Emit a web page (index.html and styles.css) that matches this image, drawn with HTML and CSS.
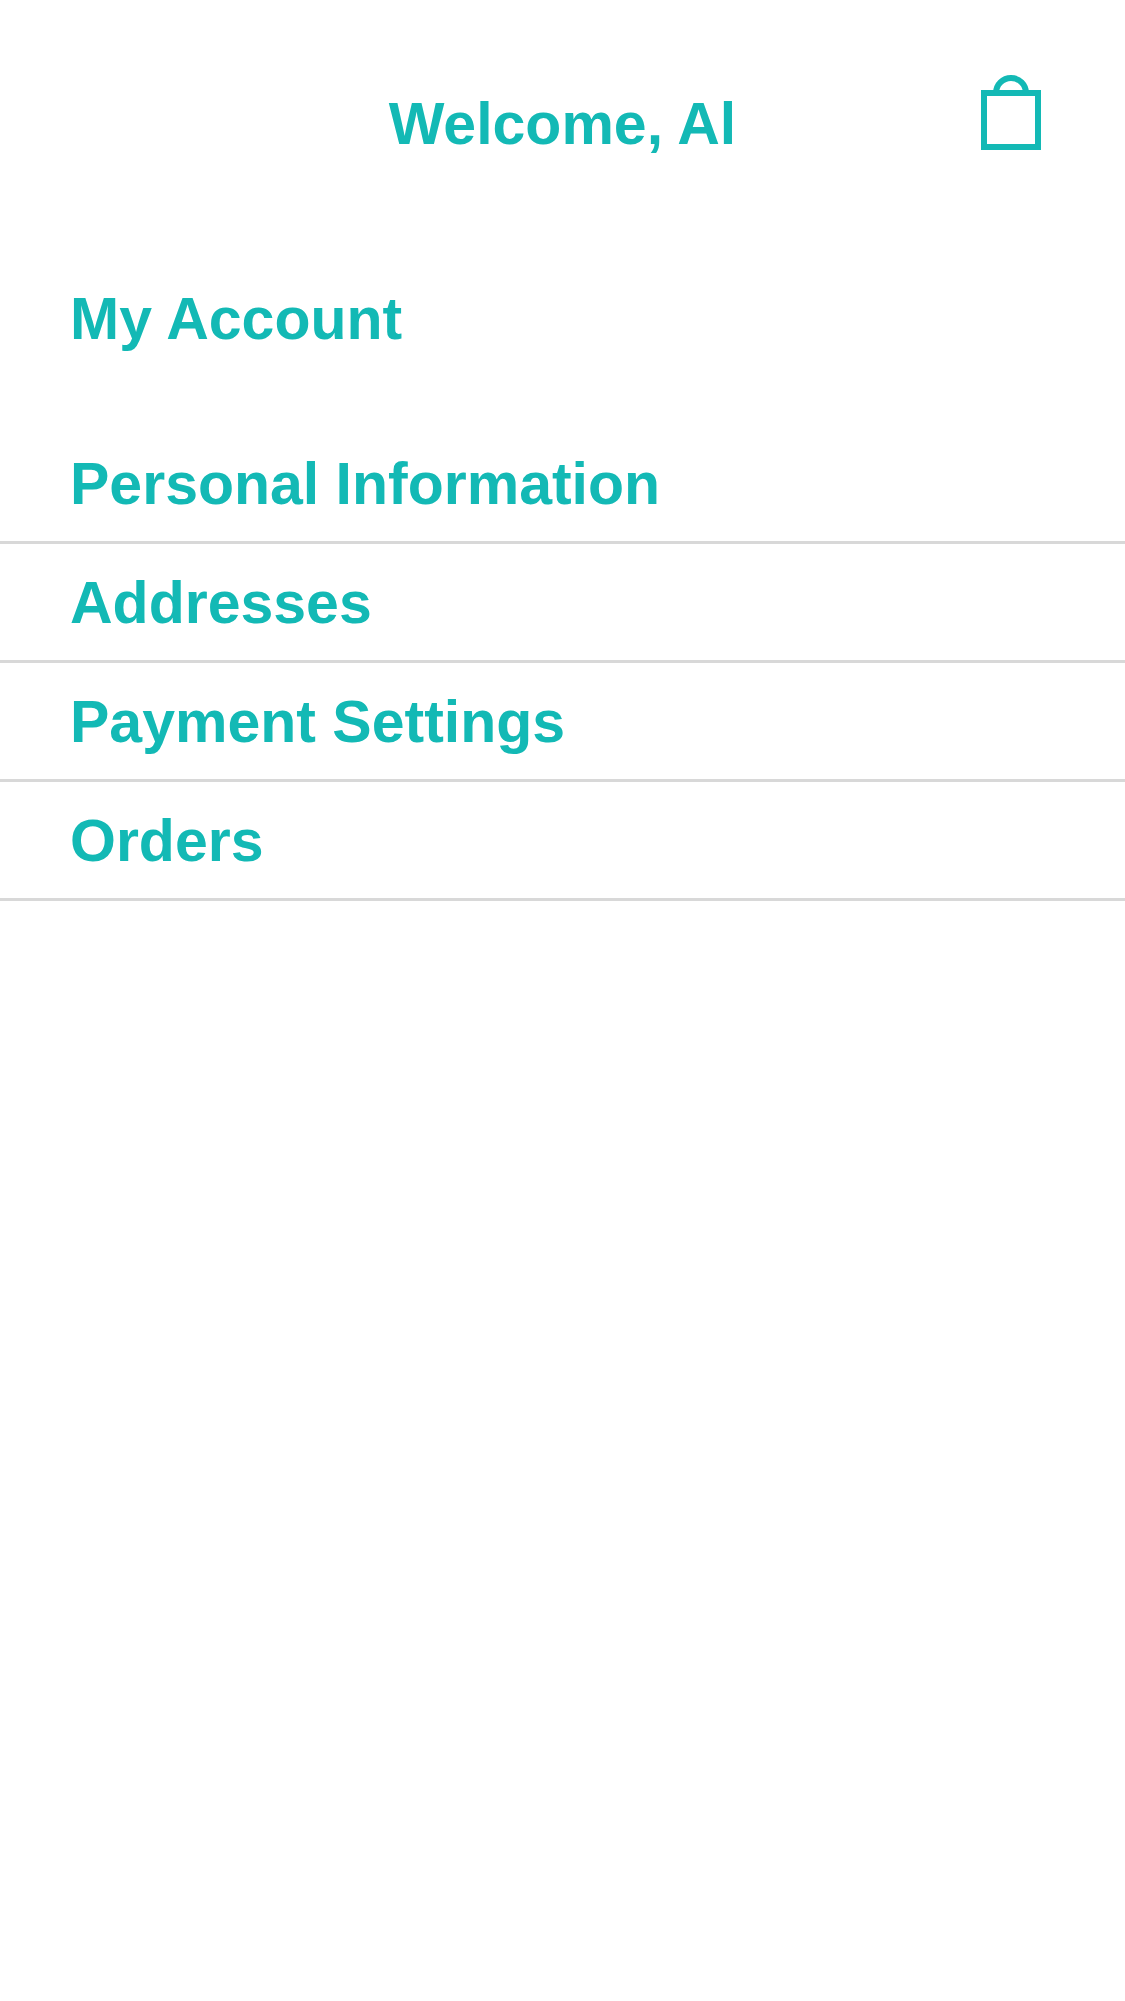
FILE: index.html
```html
<!DOCTYPE html>
<html lang="en">
<head>
<meta charset="utf-8">
<meta name="viewport" content="width=device-width, initial-scale=1">
<title>My Account</title>
<link rel="stylesheet" href="styles.css">
</head>
<body>
<header class="header">
  <h1 class="title">Welcome, Al</h1>
  <button class="bag" type="button" aria-label="Shopping bag">
    <svg class="bag-icon" viewBox="0 0 60 75" fill="none" stroke="currentColor" stroke-width="6" aria-hidden="true">
      <path d="M3 18H57V72H3Z"/>
      <path d="M15 18A15 15 0 0 1 45 18"/>
    </svg>
  </button>
</header>
<main>
  <h2 class="heading">My Account</h2>
  <nav class="menu" aria-label="Account">
    <a class="item" href="#personal">Personal Information</a>
    <a class="item" href="#addresses">Addresses</a>
    <a class="item" href="#payment">Payment Settings</a>
    <a class="item" href="#orders">Orders</a>
  </nav>
</main>
</body>
</html>
```

FILE: styles.css
```css
* {
  box-sizing: border-box;
}

body {
  margin: 0;
  background: #fff;
  color: #13b9b5;
  font: bold 59px/68px "Liberation Sans", Arial, sans-serif;
}

.header {
  display: grid;
  grid-template-columns: 1fr auto 1fr;
  padding: 75px 84px 0;
}

.title {
  grid-column: 2;
  margin: 15px 0 0;
  font-size: inherit;
}

.bag {
  justify-self: end;
  align-self: start;
  padding: 0;
  border: 0;
  background: none;
  color: inherit;
  cursor: pointer;
}

.bag-icon {
  display: block;
  width: 60px;
  height: 75px;
}

.heading {
  margin: 127px 70px 72px;
  font-size: inherit;
}

.menu {
  display: flex;
  flex-direction: column;
}

.item {
  padding: 25px 70px 23px;
  border-bottom: 3px solid #d8d8d8;
  color: inherit;
  text-decoration: none;
}
```
